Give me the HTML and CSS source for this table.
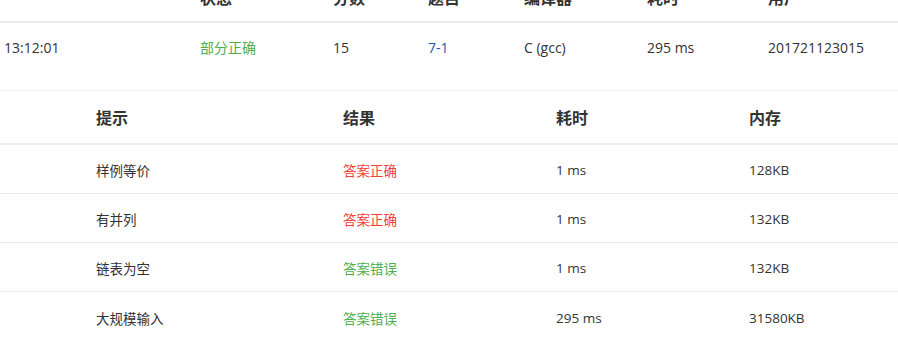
FILE: index.html
```html
<!DOCTYPE html>
<html lang="zh">
<head>
<meta charset="utf-8">
<link rel="stylesheet" href="styles.css">
</head>
<body>
<div class="page">
  <div class="main-head">
    <div class="c"></div>
    <div class="c">状态</div>
    <div class="c">分数</div>
    <div class="c">题目</div>
    <div class="c">编译器</div>
    <div class="c">耗时</div>
    <div class="c">用户</div>
  </div>
  <div class="main-row">
    <div class="c">13:12:01</div>
    <div class="c green">部分正确</div>
    <div class="c">15</div>
    <div class="c link">7-1</div>
    <div class="c">C (gcc)</div>
    <div class="c">295 ms</div>
    <div class="c">201721123015</div>
  </div>
  <div class="sub">
    <div class="sub-head">
      <div class="c">提示</div>
      <div class="c">结果</div>
      <div class="c">耗时</div>
      <div class="c">内存</div>
    </div>
    <div class="sub-row">
      <div class="c">样例等价</div>
      <div class="c red">答案正确</div>
      <div class="c">1 ms</div>
      <div class="c">128KB</div>
    </div>
    <div class="sub-row">
      <div class="c">有并列</div>
      <div class="c red">答案正确</div>
      <div class="c">1 ms</div>
      <div class="c">132KB</div>
    </div>
    <div class="sub-row">
      <div class="c">链表为空</div>
      <div class="c green">答案错误</div>
      <div class="c">1 ms</div>
      <div class="c">132KB</div>
    </div>
    <div class="sub-row last">
      <div class="c">大规模输入</div>
      <div class="c green">答案错误</div>
      <div class="c">295 ms</div>
      <div class="c">31580KB</div>
    </div>
  </div>
</div>
</body>
</html>
```

FILE: styles.css
```css
html, body {
  margin: 0;
  padding: 0;
  background: #fff;
}
body {
  font-family: "Open Sans", "Noto Sans CJK SC", sans-serif;
  font-size: 14px;
  color: #333;
}
.page {
  width: 898px;
  margin-top: -30px;
}
.main-head, .main-row {
  display: grid;
  grid-template-columns: 196px 133px 95px 96px 123px 121px 1fr;
  padding-left: 4px;
}
.main-head {
  align-items: center;
  font-weight: bold;
  font-size: 16px;
  line-height: 22px;
  padding-top: 4px;
  box-sizing: border-box;
  border-bottom: 2px solid #ebebeb;
  height: 53px;
}
.main-row {
  height: 68px;
  box-sizing: border-box;
  padding-top: 15px;
  line-height: 20px;
  border-bottom: 1px solid #eeeeee;
}
.sub-head, .sub-row {
  display: grid;
  grid-template-columns: 247px 213px 193px 1fr;
  padding-left: 96px;
  align-items: center;
}
.sub-head {
  height: 54px;
  box-sizing: border-box;
  font-size: 16px;
  font-weight: bold;
  border-bottom: 2px solid #ebebeb;
}
.sub-row {
  height: 49px;
  box-sizing: border-box;
  padding-top: 2px;
  font-size: 13.5px;
  border-bottom: 1px solid #e9e9e9;
}
.sub-row.last {
  border-bottom: none;
}
.green { color: #4cae4f; }
.red { color: #f1413a; }
.link { color: #1a5aa8; }
```
